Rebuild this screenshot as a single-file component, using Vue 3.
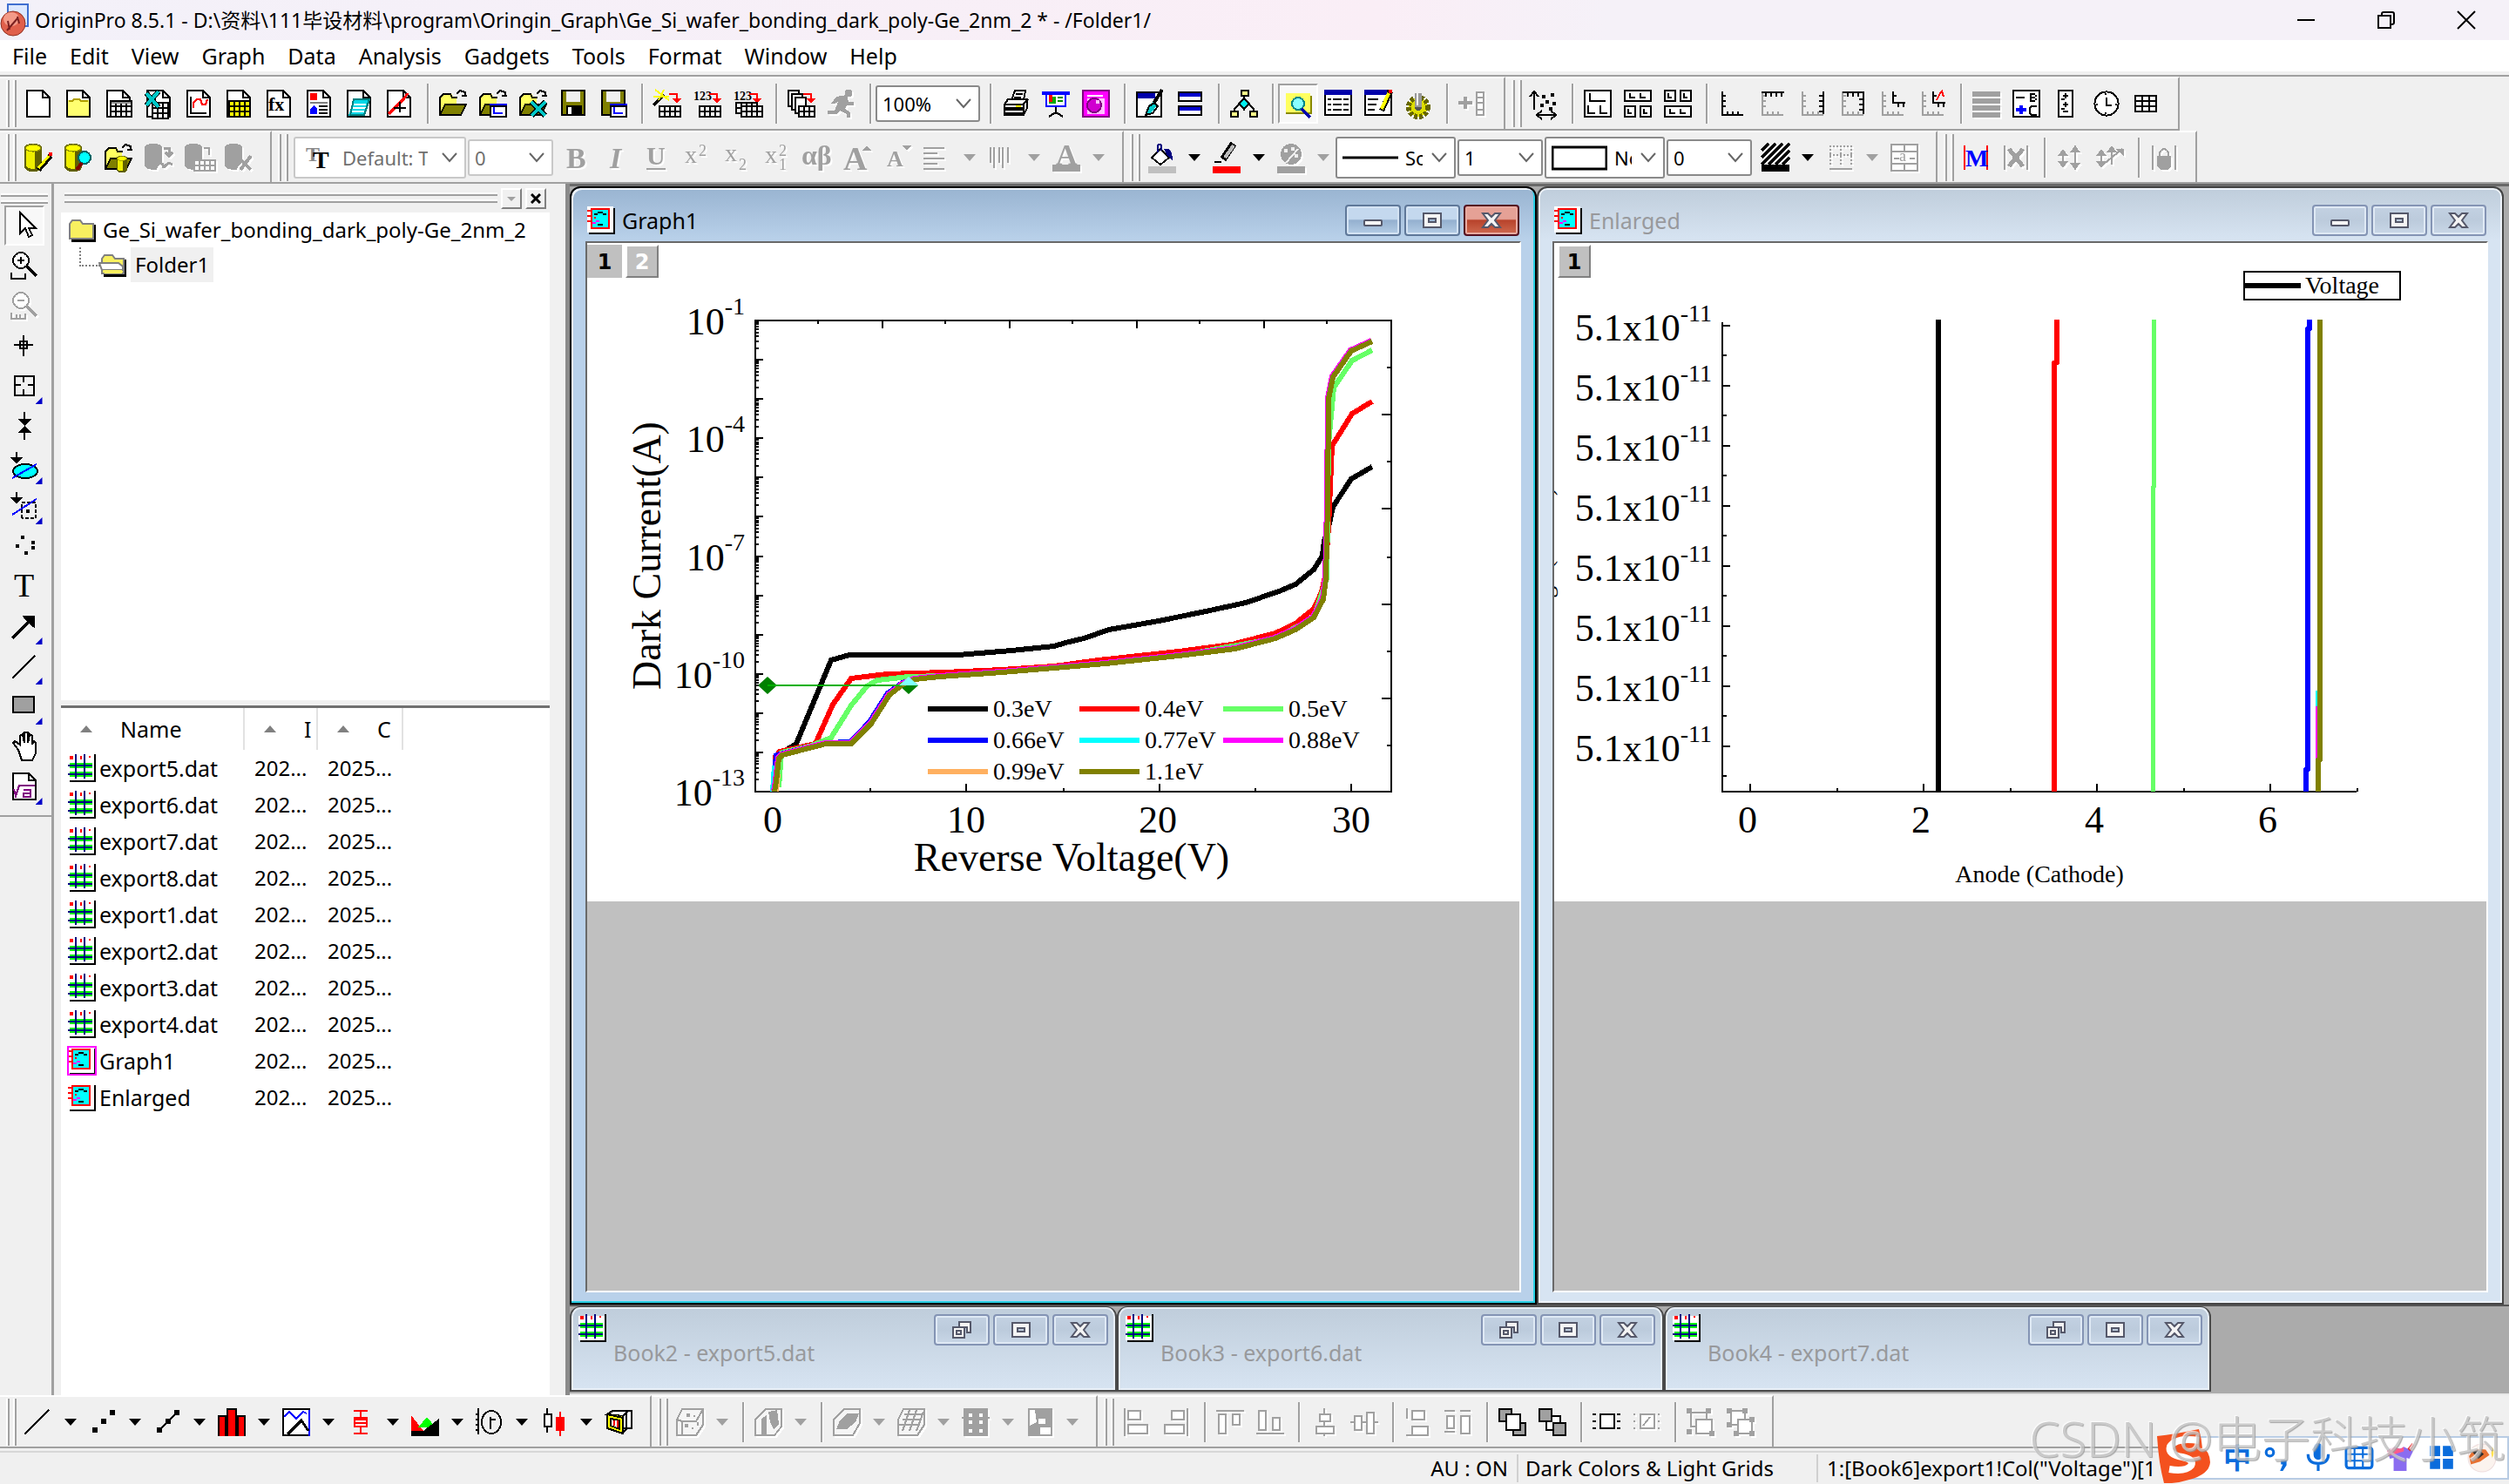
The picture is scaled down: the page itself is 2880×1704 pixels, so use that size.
<script setup>
const rect = (x, y, w, h, fill = '#000') => `<rect x="${x}" y="${y}" width="${w}" height="${h}" fill="${fill}"/>`
const line = (d, stroke = '#000', fill = 'none', w = 1) => `<path d="${d}" stroke="${stroke}" fill="${fill}" stroke-width="${w}"/>`
const shape = (d, fill = '#000') => `<path d="${d}" fill="${fill}"/>`
const glyph = (t, x, y, size, fill = '#000', extra = '') =>
  `<text x="${x}" y="${y}" font-size="${size}" font-family="Liberation Serif, serif" fill="${fill}" ${extra}>${t}</text>`
const grid = (x, y, cols, rows, cw, ch, fill = '#fff', stroke = '#000') => {
  let s = rect(x, y, cols * cw + 1, rows * ch + 1, stroke)
  for (let r = 0; r < rows; r++) for (let c = 0; c < cols; c++) s += rect(x + 1 + c * cw, y + 1 + r * ch, cw - 1, ch - 1, fill)
  return s
}
const G = '#a0a0a0'
const doc = line('M1.500 .5h9l4 4v11h-13z', '#000', '#fff') + line('M10.500 .5v4h4')
const folder = shape('M0 4h2l1-2h4l1 2h2v10h-10z', '#ffff60') + line('M.5 14.500v-10l2-2h4l1 2h3') + shape('M1 15l3-7h12l-4 7z', '#808000') + line('M.5 14.500l3-6h12l-3 6z') + line('M10 2.500l2-2 3 1v2M13 3.500h3')
const miniGraph = rect(6, 8, 10, 8) + rect(7, 10, 8, 5, '#fff') + rect(6, 8, 10, 1, '#00f') + line('M8.500 10v3.500h5', '#00f')
const redArrow = line('M9 2.500h4.500v4', '#f00') + shape('M11 5h5l-2.500 3z', '#f00')
const cylinder = shape('M0 2q0-2 5-2t5 2v11q0 3-5 3t-5-3z', '#606000') + shape('M1 2h5v12.500q-5 0-5-2z', '#ee0') + `<ellipse cx="5" cy="2.500" rx="4.500" ry="2" fill="#ff0" stroke="#909000" stroke-width=".6"/>`
const cylinderOff = shape('M0 2q0-2 5-2t5 2v9q-3 2-3 4-7 0-7-3z', G)
const box3d = line('M3.500 .5h12v9l-4 6h-11v-9z', G, '#f5f5f5') + line('M.5 6.500l3-6M.5 6.500l3 1v8M3.500 7.500h8l4-7', G)
const frame = (x, y, w, h, s = '#000', f = '#fff') => line(`M${x + .5} ${y + .5}h${w}v${h}h-${w}z`, s, f)
const axis = c => line('M2.500 1v13.500h12', c) + line('M3 3.500h1.500M3 6.500h1.500M3 9.500h1.500M5.500 12.500v2M8.500 12.500v2M11.500 12.500v2', c)
const axisTop = c => line('M14.500 14v-12.500h-12', c) + line('M11.500 2v2M8.500 2v2M5.500 2v2M14 5.500h-2M14 8.500h-2M14 11.500h-2', c)
const gridBook = rect(0, 1, 15, 14, '#fff') + rect(15, 0, 1, 16) + rect(1, 15, 15, 1) + rect(1, 1, 2, 2, '#f00') + rect(7, 1, 1, 2, '#f00') + rect(12, 1, 1, 1, '#f00') +
  rect(1, 5, 13, 3, '#0f0') + rect(1, 10, 13, 3, '#0f0') + rect(4, 5, 1, 8, '#fff') + rect(0, 6, 14, 1, '#00007f') + rect(0, 11, 14, 1, '#00007f') + rect(4, 0, 1, 14, '#00007f') + rect(9, 0, 1, 14, '#00007f')
const gridGraph = rect(0, 0, 15, 15, '#fff') + rect(15, 1, 1, 15) + rect(1, 15, 15, 1) + frame(2, 1, 10, 11, '#f00', '#0ff') + line('M0 2.500h2M0 5.500h2M0 8.500h2', '#f00') +
  rect(4, 4, 2, 1) + rect(6, 3, 3, 1) + rect(9, 4, 2, 1) + rect(4, 6, 1, 1, '#f00') + rect(5, 8, 2, 1, '#f0f') + rect(3, 9, 2, 1, '#f0f') + rect(6, 10, 3, 1)

const icons = {
  new: doc,
  newFolder: doc + rect(2, 6, 12, 9, '#ffff70') + line('M2.500 6.500h2l1-1h3l1 1h4', '#b0a000'),
  newBook: doc + grid(3, 6, 4, 3, 3, 3) + rect(4, 7, 11, 1, '#909090'),
  newExcel: doc + grid(4, 7, 3, 3, 3, 3) + line('M1 2l7 8M8 1l-7 8', '#000', 'none', 3) + line('M1 2l7 8M8 1l-7 8', '#00c8c8', 'none', 2),
  newGraph: doc + line('M3.500 4v9.500h9') + line('M5 10.500v-3l2-2h2l1 3h2l1-3', '#f00'),
  newMatrix: doc + grid(2, 6, 4, 3, 3, 3, '#ff0'),
  newFunc: doc + glyph('fx', 2, 12, 11, '#000', 'font-weight="bold"'),
  newLayout: doc + rect(3, 2, 4, 4, '#f00') + rect(3, 7, 10, 1, '#808080') + shape('M3 14v-3l2-2 2 2v3z', '#00f') + line('M8 9.500h5M8 11.500h5M8 13.500h5'),
  newNotes: doc + shape('M5 6h9l-3 9h-9z', '#00d8e8') + line('M4 8.500h8M4 10.500h8M3 12.500h8', '#fff') + line('M5 5.500h9l-3 9h-8z', '#008080'),
  newPlot: doc + line('M2 14l4-4 5-5 2-3', '#f00', 'none', 1.500) + line('M8.500 7v6M5 10.500h7'),
  open: folder,
  openTpl: folder + miniGraph,
  openXl: folder + line('M7 7l8 8M15 7l-8 8', '#000', 'none', 3) + line('M7 7l8 8M15 7l-8 8', '#00c8c8', 'none', 2),
  save: rect(1, 0, 14, 15) + rect(2, 1, 12, 13, '#808000') + rect(4, 1, 8, 6, '#f0f0f0') + rect(4, 9, 9, 6) + rect(5, 10, 2, 4, '#fff'),
  saveTpl: rect(1, 0, 14, 15) + rect(2, 1, 12, 13, '#808000') + rect(4, 1, 8, 6, '#f0f0f0') + miniGraph,
  impWiz: line('M0 9l6-6', '#000', 'none', 2) + line('M1 0l8 6M6 0l-3 6M0 4h9', '#ff0') + redArrow + grid(3, 9, 4, 2, 3, 3),
  imp1: glyph('123', 0, 6, 7, '#000', 'font-weight="bold"') + redArrow + grid(3, 9, 4, 2, 3, 3),
  impN: glyph('123', 0, 6, 7, '#000', 'font-weight="bold"') + redArrow + grid(1, 7, 4, 2, 3, 3) + grid(4, 9, 4, 2, 3, 3),
  dup: frame(0, 0, 6, 9) + frame(2, 2, 6, 9) + frame(4, 4, 6, 9) + redArrow + grid(6, 9, 3, 2, 3, 3),
  run: `<circle cx="12" cy="2" r="2.200" fill="${G}"/>` + shape('M5 4l6-1 1 4h3v2h-4l-1 2 3 2v3h-2v-2l-4-2-2 2H0v-2h4l2-5-2 1H2z', G),
  print: line('M5.500 6l2-5.500h6l-1 5.500z', '#000', '#fff') + line('M8 2.500h4M7 4.500h4') + line('M1.500 8.500l2-3h11v5l-2 4h-11z', '#000', '#fff') + line('M1 8.500h11l3-3M12.500 8v7', '#000') + rect(2, 10, 10, 2) + rect(8, 9, 3, 1, '#ff0') + line('M2 13.500h10'),
  slide: rect(0, 1, 16, 2, '#00f') + rect(2, 3, 12, 7, '#00f') + rect(3, 3, 10, 6, '#fff') + rect(4, 4, 4, 4, '#0a0') + rect(4, 3, 2, 4, '#f00') + line('M9 4.500h3M9 6.500h3', '#080') + line('M8 10v4M4 15.500l3-2h2l3 2'),
  project: frame(0, 0, 15, 15, '#800080', '#f0f') + rect(3, 3, 9, 1, '#fff') + rect(3, 5, 10, 9, '#ffc0ff') + `<circle cx="7" cy="9" r="4" fill="#d000d0" stroke="#800080"/>` + rect(8, 6, 2, 2, '#ffc0ff'),
  edit: frame(0, 1, 14, 14) + rect(1, 2, 10, 3, '#00a') + line('M15 0l-5 8', '#000', 'none', 2) + shape('M6 14l1-5 3-2 2 2-3 4z', '#0cc') + line('M5.500 14.500l2-5 3-2 2 2-3 4z'),
  twoWin: frame(1, 1, 13, 5) + rect(2, 2, 12, 2, '#00c') + frame(1, 9, 13, 5) + rect(2, 10, 12, 2, '#00c'),
  tree: line('M8 3v3M8 10v2M2.500 13v-2l3-3M13.500 13v-2l-3-3') + frame(6, 0, 4, 3, '#000', '#ff8') + shape('M8 5l3 3-3 3-3-3z', '#0ee') + line('M8 5l3 3-3 3-3-3z') + frame(0, 12, 4, 3, '#000', '#ff8') + frame(11, 12, 4, 3, '#000', '#ff8'),
  find: rect(1, 2, 14, 12, '#ffff60') + line('M1 13.500h14.500v-10', '#880') + `<circle cx="8" cy="8" r="3.500" fill="#8ff" stroke="#088"/>` + line('M10 11l5 5', '#00a', 'none', 2),
  list: frame(0, 0, 15, 14) + rect(0, 0, 16, 3, '#00a') + line('M2 5.500h12M2 8.500h12M2 11.500h12', '#000') + rect(4, 4, 1, 10, '#fff') + rect(10, 4, 1, 10, '#fff'),
  listEdit: frame(0, 0, 15, 14) + rect(0, 0, 13, 3, '#00a') + line('M2 5.500h6M2 8.500h5M2 11.500h4') + line('M15 1l-5 11', '#000', 'none', 3) + line('M14 2l-4 9', '#ff0', 'none', 2) + rect(14, 0, 2, 2, '#f00'),
  gear: `<circle cx="8" cy="10" r="5.500" fill="#dd0" stroke="#660" stroke-width="3" stroke-dasharray="2 1"/><circle cx="8" cy="10" r="4" fill="#dd0"/><circle cx="8" cy="10" r="2" fill="#555"/>` + rect(6, 2, 4, 8, '#999') + line('M7.500 2v7', '#eee'),
  addCol: line('M0 7.500h8M4 4v7', G, 'none', 2) + frame(10, 1, 4, 13, G) + line('M10 4.500h5M10 7.500h5M10 11.500h5', G),

  scatter: line('M2.500 1v10.500M0 4l2.500-3 2.500 3M5 14.500h10M7 12l-3 2.500 3 2.500M12 12l3 2.500-3 2.500') + rect(7, 3, 2, 2) + rect(12, 2, 2, 2) + rect(9, 6, 2, 2) + rect(13, 7, 2, 2) + rect(6, 8, 2, 2) + rect(11, 10, 2, 2),
  lay1: frame(0, 0, 15, 15) + line('M3.500 2v4.500h9M2.500 9v4.500h4M9.500 9v4.500h4'),
  lay2: frame(0, 0, 15, 6) + line('M3.500 2v2.500h3M9.500 2v2.500h3') + frame(0, 9, 6, 6) + frame(9, 9, 6, 6) + line('M2.500 11v2.500h2M11.500 11v2.500h2'),
  lay3: frame(0, 0, 6, 6) + frame(9, 0, 6, 6) + line('M2.500 2v2.500h2M11.500 2v2.500h2') + frame(0, 9, 15, 6) + line('M3.500 11v2.500h3M9.500 11v2.500h3'),
  ax1: axis('#000'),
  ax2: axis(G) + line('M2 1.500h13M4.500 2v2M7.500 2v2M10.500 2v2M13.500 2v2'),
  ax3: axis(G) + line('M14.500 1v13M14 3.500h-2M14 6.500h-2M14 9.500h-2M14 12.500h-2'),
  ax4: axis(G) + axisTop('#000'),
  ax5: axis(G) + line('M8.500 1v6.500h7M9 3.500h1.500M11.500 8v2M14.500 8v2'),
  ax6: axis(G) + line('M8.500 1v6.500h7M9 3.500h1.500M11.500 8v2M14.500 8v2') + line('M10.500 6l2-4 1-1 1 3', '#f00'),
  bars: rect(0, 1, 16, 3, G) + rect(0, 5, 16, 3, G) + rect(0, 9, 16, 3, G) + rect(0, 13, 16, 3, G),
  bc: frame(0, 0, 15, 15) + line('M2 4.500h5M10.500 2v5M10 2.500h3M10 4.500h3M10 6.500h3M13.500 3v1M13.500 5v1M14 9.500h-3l-1 1v3l1 1h3') + line('M2 11.500h6M5 9v5', '#00f', 'none', 2),
  scaleBar: frame(3, 0, 8, 15) + line('M6 3.500h3M7.500 2v3M6 8.500h3M7.500 7v3M6 12.500h3M5 5.500h2M5 11h2'),
  clock: `<circle cx="8" cy="8" r="6.800" fill="#fff" stroke="#000"/>` + line('M8 4.500v4.500h3') + rect(7, 2, 1, 1) + rect(7, 13, 1, 1) + rect(2, 8, 1, 1) + rect(13, 8, 1, 1),
  table: grid(1, 3, 3, 3, 4, 3),

  dbEdit: cylinder + line('M15 7l-7 8', '#000', 'none', 3) + line('M14 7l-6 7', '#ff0', 'none', 1.500) + rect(14, 5, 2, 2, '#f00'),
  dbFind: cylinder + `<circle cx="11.500" cy="8" r="3.500" fill="#0ff" stroke="#066"/>` + line('M10 11l-3 4', '#800000', 'none', 2),
  dbOpen: folder + `<g transform="translate(7 7) scale(.6)">${cylinder}</g>`,
  db4: cylinderOff + line('M11 2.500h3v4M12 5l2 2 2-2M6 14q-1-3 2-3t3 3q2-4 5-2', G, 'none', 1.500),
  db5: cylinderOff + line('M11 2.500h3v4', G) + grid(5, 9, 4, 2, 3, 3, '#fff', G),
  db6: cylinderOff + line('M9 15l6-8M9 9l6 6', G, 'none', 2),
  bold: glyph('B', 2, 14, 17, G, 'font-weight="bold"'),
  ital: glyph('I', 4, 14, 17, G, 'font-weight="bold" font-style="italic"'),
  under: glyph('U', 2, 12, 15, G, 'font-weight="bold"') + rect(2, 14, 11, 1, G),
  sup: glyph('x', 1, 11, 14, G) + glyph('2', 9, 7, 9, G),
  sub: glyph('x', 1, 10, 14, G) + glyph('2', 9, 15, 9, G),
  supsub: glyph('x', 1, 11, 14, G) + glyph('2', 9, 7, 9, G) + glyph('1', 9, 15, 9, G),
  greek: glyph('αβ', -1, 12, 16, G, 'font-weight="bold"'),
  bigger: glyph('A', 0, 15, 19, G, 'font-weight="bold"') + shape('M11 4l2.500-3 2.500 3z', G),
  smaller: glyph('A', 2, 13, 13, G, 'font-weight="bold"') + shape('M11 1h5l-2.500 3z', G),
  align: line('M0 2.500h12M0 5.500h8M0 8.500h12M0 11.500h8', G) + line('M0 14.500h12', G),
  vlines: line('M1.500 2v9M3.500 2v12M6.500 2v9M8.500 2v12M11.500 2v9', G),
  fontCol: glyph('A', 2, 12, 17, G, 'font-weight="bold"') + rect(0, 12, 16, 4, G),
  fill: line('M2 8l5-5 5 5-5 4z', '#000', '#fff') + line('M5.500 5v-4q1-1 2 0v3', '#00007f') + shape('M9 3h3q2 2 2 7l-3-3z', '#00007f') + rect(0, 13, 16, 4, '#c0c0c0'),
  pen: line('M12 0l-6 9', '#000', 'none', 4) + line('M12 1l-5 7', '#bbb', 'none', 2) + line('M1 10.500h4') + rect(0, 13, 16, 4, '#f00'),
  palette: `<circle cx="8" cy="6" r="6" fill="${G}"/>` + rect(4, 3, 2, 2, '#eee') + rect(8, 2, 2, 2, '#eee') + rect(10, 6, 2, 2, '#eee') + line('M5 11l7-8', '#eee') + rect(0, 13, 16, 4, G),
  hatch: line('M0 4l4-4M0 8l8-8M0 12l12-12M4 12l12-12M8 12l8-8M12 12l4-4', '#000', 'none', 1.600) + rect(0, 12, 16, 4),
  border: line('M2 1.500h13M2 6.500h13M2.500 1v11M8.500 1v11M14.500 1v11', G, 'none').replace('<path', '<path stroke-dasharray="1 1"') + rect(2, 14, 13, 1, G),
  cells: frame(0, 0, 15, 15, G) + line('M0 4.500h16M0 11.500h16M8 0v4M8 12v4M2 8.500h3M11 8.500h3', G) + glyph('a', 5, 10, 9, G),
  mark: line('M1.500 1v14M14.500 1v14', '#f00') + glyph('M', 2, 13, 14, '#00f', 'font-weight="bold"'),
  unmark: line('M1.500 1v14M14.500 1v14', G) + line('M4 3l8 10M12 3l-8 10', G, 'none', 2.500),
  arr1: line('M4 4v9M11 1v14', G) + shape('M1 7l3-4 3 4zM1 10l3 4 3-4zM8 5l3-4 3 4zM8 11l3 4 3-4z', G),
  arr2: line('M3 4v9M9 2v10M4 12l11-9', G) + shape('M0 7l3-4 3 4zM0 10l3 4 3-4zM6 5l3-4 3 4zM11 3h5v4z', G),
  lock: line('M1.500 1v14M14.500 1v14M5.500 7v-2q2.500-4 5 0v2', G) + shape('M4 7h8v6l-2 2h-4l-2-2z', G),

  pline: line('M0 15L14 1'),
  pscatter: rect(2, 11, 3, 3) + rect(7, 6, 3, 3) + rect(12, 1, 3, 3),
  plinesym: line('M3 13L14 2') + rect(2, 11, 3, 3) + rect(7, 6, 3, 3) + rect(12, 1, 3, 3),
  pbar: rect(0, 4, 16, 12) + rect(5, 0, 6, 5) + rect(1, 5, 3, 11, '#f00') + rect(6, 1, 4, 15, '#f00') + rect(12, 5, 3, 11, '#f00'),
  pmulti: frame(0, 0, 15, 15) + line('M15.500 1v15M1 5l3-3 4 4 4-4 2 1', '#00f') + line('M3 15l8-8 4 6', '#000', 'none', 1.500),
  pbox: line('M4 1.500h8M8 2v4M8 11v4M4 14.500h8', '#f00') + rect(4, 5, 8, 6, '#f00') + rect(5, 7, 6, 1, '#fff') + rect(5, 9, 6, 1, '#fff'),
  parea: shape('M0 4l7 9h9v3H0z', '#f00') + shape('M4 11l5-6 5 6z', '#0f0') + shape('M0 13h7l9-7v10H0z'),
  ppolar: line('M1.500 0v15M0 3.500h2M0 6.500h2M0 9.500h2M0 12.500h2') + `<ellipse cx="9" cy="8" rx="5.500" ry="6.500" fill="none" stroke="#000"/>` + line('M8.500 5v7M8.500 6.500h3'),
  pstock: line('M4 0v14') + frame(2, 3, 4, 7) + line('M11.500 2v14', '#f00') + rect(9, 5, 5, 8, '#f00'),
  pbook: frame(5, 1, 10, 10, '#000', '#fff') + line('M1.500 3.500l3-2h9l-3 3z', '#000', '#fff') + line('M12.500 3v9l-2 2', '#000') + shape('M1 3l10 2v10l-9-3z', '#ff0') + line('M1.500 3.500l9 2v9l-9-3z') + line('M3.500 6v4l5 2v-5z', '#000', '#fff') + line('M5.500 7v3M7.500 7v4', '#f00'),
  b1: box3d + rect(6, 3, 2, 2, G) + rect(10, 4, 1, 1, G) + rect(5, 9, 2, 2, G) + rect(9, 11, 1, 1, G) + rect(12, 8, 1, 2, G),
  b2: line('M3.500 3.500l3-3h9v10l-4 5h-11v-9z', G, '#f5f5f5') + shape('M4 6l3-2v12H4zM8 2l5-1 1 8-3 3-2-4z', G),
  b3: line('M3.500 3.500l3-3h9v8l-4 7h-11v-9z', G, '#f5f5f5') + shape('M4 7l4-4h7l-2 5-5 4H2z', G),
  b4: line('M3.500 .5h12v9l-4 6h-11v-9z', G, '#f5f5f5') + line('M4 3.500h11M3 6.500h11M1 9.500h12M7 1l-4 12M11 1l-4 12M15 2l-4 11', G),
  b5: rect(1, 0, 14, 16, G) + rect(4, 3, 2, 2, '#fff') + rect(10, 3, 2, 2, '#fff') + rect(4, 7, 2, 2, '#fff') + rect(10, 7, 2, 2, '#fff') + rect(4, 12, 2, 2, '#fff') + rect(10, 12, 2, 2, '#fff') + rect(0, 5, 16, 1, G),
  b6: frame(1, 0, 13, 15, G) + shape('M5 1h9v10H8v4H2v-5l4-2z', G) + rect(7, 6, 4, 3, '#fff'),
  al1: line('M1.500 0v16', G) + frame(3, 1, 7, 5, G) + frame(3, 9, 11, 5, G),
  al2: line('M14.500 0v16', G) + frame(5, 1, 7, 5, G) + frame(1, 9, 11, 5, G),
  al3: line('M0 1.500h16', G) + frame(1, 3, 4, 11, G) + frame(9, 3, 4, 6, G),
  al4: line('M0 14.500h16', G) + frame(1, 1, 4, 11, G) + frame(9, 5, 4, 7, G),
  al5: line('M8 0v16', G) + frame(5, 3, 6, 4, G) + frame(3, 10, 10, 4, G),
  al6: line('M0 8h16', G) + frame(2, 4, 4, 8, G) + frame(9, 2, 4, 12, G),
  al7: line('M1.500 0v6M1 15.500h3', G) + frame(4, 1, 7, 5, G) + frame(4, 10, 9, 5, G),
  al8: line('M0 1.500h6M9 1.500h6M0 13.500h6', G) + frame(1, 4, 4, 7, G) + frame(9, 4, 5, 10, G),
  front: frame(0, 0, 7, 7, '#000', G) + frame(8, 8, 7, 7, '#000', G) + frame(4, 3, 8, 9),
  back: frame(4, 4, 8, 8) + frame(0, 0, 7, 7, '#000', G) + frame(8, 8, 7, 7, '#000', G),
  sel: frame(4, 3, 8, 8) + line('M1 3v1M1 7v1M1 11v1M15 3v1M15 7v1M15 11v1', '#000', 'none', 2),
  unsel: frame(4, 3, 8, 8, G) + line('M6 10l4-5M1 3v1M1 7v1M1 11v1M15 3v1M15 7v1M15 11v1', G, 'none', 1),
  group: frame(2, 2, 9, 8, G, 'none') + frame(5, 6, 9, 8, G) + rect(0, 0, 3, 3, G) + rect(11, 0, 3, 3, G) + rect(0, 12, 3, 3, G) + rect(13, 13, 3, 3, G),
  ungroup: frame(2, 1, 8, 8, G) + frame(6, 6, 8, 8, G) + rect(0, 0, 3, 3, G) + rect(9, 0, 3, 3, G) + rect(0, 8, 3, 3, G) + rect(13, 5, 3, 3, G) + rect(4, 13, 3, 3, G) + rect(13, 13, 3, 3, G),

  pointer: line('M5.500 .5v12l3-3 2 5 2-1-2-4h4z', '#000', '#fff'),
  zoomIn: `<circle cx="6" cy="5" r="4.500" fill="#fff" stroke="#000"/>` + line('M6 3v4M4 5h4') + line('M9 8l6 6', '#000', 'none', 2) + line('M.5 12v3.500h8v-3'),
  zoomOut: `<circle cx="6" cy="5" r="4.500" fill="#fff" stroke="${G}"/>` + line('M4 5h4', G) + line('M9 8l6 6', G, 'none', 2) + line('M.5 12v3.500h8v-3M3.500 13v2M5.500 13v2', G),
  reader: line('M7.500 2v12M2 7.500h11M5.500 5.500h4v4h-4z'),
  dataReader: frame(2, 2, 11, 11, '#000', 'none') + line('M7.500 2v4M7.500 10v4M2 7.500h4M10 7.500h4'),
  selector: line('M8 0v5M8 11v5') + shape('M4 4h8l-4 4zM4 12h8l-4-4z'),
  mask1: line('M3.500 0v4') + shape('M0 3h7l-3.500 4z') + `<ellipse cx="8.500" cy="11" rx="7" ry="4" fill="#0ff" stroke="#000"/>` + line('M1 15l14-8', '#00f'),
  mask2: line('M3.500 0v4') + shape('M0 3h7l-3.500 4z') + line('M6.500 15v-9h8v9h-8').replace('<path', '<path stroke-dasharray="2 1"') + line('M1 13l14-9', '#00f') + rect(9, 10, 2, 2),
  dots: rect(6, 2, 2, 2) + rect(3, 7, 2, 2) + rect(12, 5, 2, 2) + rect(12, 8, 2, 2) + rect(8, 11, 2, 2),
  text: glyph('T', 2, 14, 19),
  arrow: line('M1 15L11 5', '#000', 'none', 1.500) + shape('M7 2h7v7l-2-1-4-4z'),
  ruler: line('M1 15L14 2', '#000', 'none', 1.300),
  rectangle: frame(1, 2, 12, 9, '#000', G),
  hand: line('M4.500 10l-3-4 1-1 3 2v-5l1.500-1 1 5v-6l2 0v6l1-5 1.500 1v5l1-2 1 1v6l-2 4h-6z', '#000', '#fff'),
  eqn: doc + line('M2 9.500l1 4 2-6h9M7.500 10h4v4h-4v-2h4', '#800080'),
}

const c = (w, h, label, value, extra = {}) => ({ w, h, label, value, ...extra })
const top1 = [
  ['new', 'newFolder', 'newBook', 'newExcel', 'newGraph', 'newMatrix', 'newFunc', 'newLayout', 'newNotes', 'newPlot', '|', 'open', 'openTpl', 'openXl', 'save', 'saveTpl', '|', 'impWiz', 'imp1', 'impN', '|', 'dup', '-run', '|',
    c(120, 42, 'Zoom', '100%'), '|', 'print', 'slide', 'project', '|', 'edit', 'twoWin', '|', 'tree', '|', '+find', 'list', 'listEdit', 'gear', '|', '-addCol'],
  ['scatter', '|', 'lay1', 'lay2', 'lay3', '|', 'ax1', 'ax2', 'ax3', 'ax4', 'ax5', 'ax6', '|', '-bars', 'bc', 'scaleBar', 'clock', 'table'],
]
const top2 = [
  ['dbEdit', 'dbFind', 'dbOpen', '-db4', '-db5', '-db6'],
  [c(198, 48, 'Font', 'Default: Times New Roman', { icon: 'tt', off: true }), c(98, 42, 'Font size', '0', { off: true }), '-bold', '-ital', '-under', '-sup', '-sub', '-supsub', '-greek', '-bigger', '-smaller', '-align', '-v', '-vlines', '-v', '-fontCol', '-v'],
  ['fill', 'v', 'pen', 'v', '-palette', '-v', c(138, 48, 'Line style', 'Solid', { icon: 'stroke' }), c(98, 42, 'Line width', '1'), c(138, 48, 'Pattern', 'None', { icon: 'swatch' }), c(98, 42, 'Pattern width', '0'), 'hatch', 'v', '-border', '-v', '-cells'],
  ['mark', '-unmark', '|', '-arr1', '-arr2', '|', '-lock'],
]
const bottom = [
  ['pline', 'v', 'pscatter', 'v', 'plinesym', 'v', 'pbar', 'v', 'pmulti', 'v', 'pbox', 'v', 'parea', 'v', 'ppolar', 'v', 'pstock', 'v', 'pbook'],
  ['-b1', '-v', '|', '-b2', '-v', '|', '-b3', '-v', '-b4', '-v', '-b5', '-v', '-b6', '-v'],
  ['-al1', '-al2', '|', '-al3', '-al4', '|', '-al5', '-al6', '|', '-al7', '-al8', '|', 'front', 'back', '|', 'sel', '-unsel', '|', '-group', '-ungroup'],
]
const norm = groups => groups.map(g => g.map(it => {
  if (typeof it !== 'string') return { kind: 'combo', ...it }
  if (it === '|') return { kind: 'sep' }
  const off = it[0] === '-', on = it[0] === '+'
  const name = off || on ? it.slice(1) : it
  return { kind: name === 'v' ? 'drop' : 'btn', name, off, on }
}))
const bars = [
  { id: 't1', groups: norm(top1) },
  { id: 't2', groups: norm(top2) },
  { id: 'b', groups: norm(bottom) },
]
const menus = ['File', 'Edit', 'View', 'Graph', 'Data', 'Analysis', 'Gadgets', 'Tools', 'Format', 'Window', 'Help']
const tools = [
  { n: 'pointer', on: true }, { n: 'zoomIn' }, { n: 'zoomOut', off: true }, { n: 'reader' }, { n: 'dataReader', more: true }, { n: 'selector' },
  { n: 'mask1', more: true }, { n: 'mask2', more: true }, { n: 'dots' }, { n: 'text' }, { n: 'arrow', more: true }, { n: 'ruler', more: true },
  { n: 'rectangle', more: true }, { n: 'hand' }, { n: 'eqn', more: true },
]
const files = [...[5, 6, 7, 8, 1, 2, 3, 4].map(n => ({ name: `export${n}.dat`, icon: gridBook })), { name: 'Graph1', icon: gridGraph, active: true }, { name: 'Enlarged', icon: gridGraph }]
const books = ['Book2 - export5.dat', 'Book3 - export6.dat', 'Book4 - export7.dat']

// Graph1: log y axis, 10^-1 .. 10^-13
const decade = 541 / 12
const logTicks = []
for (let d = 0; d < 12; d++) {
  logTicks.push({ y: 89 + d * decade, len: 9 })
  for (let k = 2; k < 10; k++) logTicks.push({ y: 89 + (d + 1 - Math.log10(k)) * decade, len: 4 })
}
const yLabels = [-1, -4, -7, -10, -13].map((e, i) => ({ e: String(e), y: 105 + i * 3 * decade }))
const olive = '215,630 217,618 220,592 224,588 274,575 303,575 326,552 347,519 362,507 376,501 405,498 476,493 536,488 595,483 679,474 744,466 790,454 813,444 834,430 845,409 848,385 850,300 851,179 856,154 877,124 901,113'
const curves = [
  { c: '#000', p: '216,630 218,592 224,585 240,575 280,479 301,473 426,473 487,468 536,463 549,459 570,454 599,444 656,434 710,423 756,413 794,400 813,392 834,375 844,359 846,342 850,331 856,303 877,271 901,257' },
  { c: '#f00', p: '215,630 216,590 221,584 262,575 282,530 303,500 344,495 410,493 476,490 536,486 587,479 679,469 740,461 790,448 813,437 834,420 843,401 847,383 851,326 855,233 878,196 901,182' },
  { c: '#6f6', p: '220,625 223,585 255,578 280,568 303,531 321,509 333,502 369,498 410,497 536,488 679,474 790,454 834,430 849,385 851,230 857,166 878,135 901,123' },
  { c: '#00f', p: '214,618 217,588 274,574 302,573 324,550 345,517 362,505 376,500' },
  { c: '#0ff', p: '213,630 215,600' },
  { c: '#f0f', p: olive, dx: -1, dy: -1 },
  { c: '#ffb060', p: '217,630 219,610' },
  { c: '#808000', p: olive },
]
const legend = [
  { t: '0.3eV', c: '#000', x: 391, y: 535 }, { t: '0.4eV', c: '#f00', x: 565, y: 535 }, { t: '0.5eV', c: '#6f6', x: 730, y: 535 },
  { t: '0.66eV', c: '#00f', x: 391, y: 571 }, { t: '0.77eV', c: '#0ff', x: 565, y: 571 }, { t: '0.88eV', c: '#f0f', x: 730, y: 571 },
  { t: '0.99eV', c: '#ffb060', x: 391, y: 607 }, { t: '1.1eV', c: '#808000', x: 565, y: 607 },
]
const seq = (n, a, step) => Array.from({ length: n }, (_, i) => a + i * step)
const traces = [
  { c: '#000', w: 6, p: '441,88 441,630' },
  { c: '#f00', w: 6, p: '577,88 577,137 574,138 574,630' },
  { c: '#6f6', w: 5, p: '688,88 688,280 687,281 687,630' },
  { c: '#00f', w: 6, p: '867,88 867,98 865,99 865,604 863,605 863,630' },
  { c: '#0ff', w: 2, p: '875,514 875,532' },
  { c: '#f0f', w: 2, p: '875,532 875,593' },
  { c: '#808000', w: 6, p: '879,88 879,593 877,594 877,630' },
]
</script>

<template>
  <div class="app">
    <header class="titlebar">
      <svg class="logo" viewBox="0 0 34 38">
        <rect x="9" y="1" width="23" height="25" fill="#dce8ff" stroke="#3f6fd0" stroke-width="2" />
        <ellipse cx="15" cy="23" rx="14" ry="14" fill="#e0604c" stroke="#903020" />
        <ellipse cx="13" cy="18" rx="9" ry="8" fill="#f39a88" />
        <path d="M8 31L21 16M9 20l2 10M20 15l2 8" stroke="#7a2020" stroke-width="2" fill="none" />
      </svg>
      <h1>OriginPro 8.5.1 - D:\资料\111毕设材料\program\Oringin_Graph\Ge_Si_wafer_bonding_dark_poly-Ge_2nm_2 * - /Folder1/</h1>
      <button class="sys" aria-label="Minimize"><svg viewBox="0 0 20 20"><path d="M0 10h20" /></svg></button>
      <button class="sys" aria-label="Restore"><svg viewBox="0 0 20 20"><path d="M1 5h14v14H1zM5 5V3q0-2 2-2h10q2 0 2 2v10q0 2-3 2" /></svg></button>
      <button class="sys" aria-label="Close"><svg viewBox="0 0 20 20"><path d="M0 0l20 20M20 0L0 20" /></svg></button>
    </header>

    <nav class="menu"><button v-for="m in menus" :key="m">{{ m }}</button></nav>

    <template v-for="bar in bars" :key="bar.id">
      <main v-if="bar.id === 'b'" class="work">
        <aside class="toolcol">
          <div class="tools">
            <i class="hgrip"></i>
            <button v-for="t in tools" :key="t.n" :aria-label="t.n" :class="{ pressed: t.on }" :disabled="t.off">
              <svg class="ico" :class="{ off: t.off }" viewBox="0 0 16 16" v-html="icons[t.n]"></svg>
              <span v-if="t.more" class="corner"></span>
            </button>
          </div>
        </aside>

        <section class="explorer">
          <div class="caption">
            <i class="hgrip"></i>
            <button aria-label="Options"><svg viewBox="0 0 12 12"><path d="M1 4h10L6 9z" fill="#a0a0a0" /></svg></button>
            <button aria-label="Close panel"><svg viewBox="0 0 12 12"><path d="M1 1l10 10M11 1L1 11" stroke="#000" stroke-width="3" /></svg></button>
          </div>
          <div class="tree">
            <div class="node">
              <svg viewBox="0 0 32 28"><path d="M30 8v18H4" fill="none" stroke="#000" stroke-width="4" /><path d="M2 24V7l3-4h9l3 4h12v17z" fill="#f8f060" stroke="#808080" stroke-width="2" /></svg>
              <span>Ge_Si_wafer_bonding_dark_poly-Ge_2nm_2</span>
            </div>
            <div class="node child">
              <svg viewBox="0 0 32 28"><path d="M30 8v18H6" fill="none" stroke="#000" stroke-width="4" /><path d="M4 24V7l3-4h9l3 4h10v17z" fill="#f8f060" stroke="#808080" stroke-width="2" /><path d="M1 12h22l5 4v4H4z" fill="#fff" stroke="#808080" stroke-width="2" /><path d="M5 20h22v4H7z" fill="#f8f060" /></svg>
              <span class="picked">Folder1</span>
            </div>
          </div>
          <div class="list">
            <table>
              <thead>
                <tr>
                  <th><i class="up"></i>Name</th>
                  <th><i class="up"></i>I</th>
                  <th><i class="up"></i>C</th>
                </tr>
              </thead>
              <tbody>
                <tr v-for="f in files" :key="f.name">
                  <td><div class="file"><svg :class="{ active: f.active }" viewBox="0 0 16 16" v-html="f.icon"></svg>{{ f.name }}</div></td>
                  <td>202...</td>
                  <td>2025...</td>
                </tr>
              </tbody>
            </table>
          </div>
        </section>

        <section class="mdi">
          <div class="graphs">
            <article class="win focus">
              <div class="wintitle">
                <svg class="ico" viewBox="0 0 16 16" v-html="gridGraph"></svg>
                <h2>Graph1</h2>
                <button aria-label="Minimize"><svg viewBox="0 0 24 20"><rect x="2" y="10" width="20" height="6" rx="1" /></svg></button>
                <button aria-label="Maximize"><svg viewBox="0 0 24 20"><path fill-rule="evenodd" d="M2 2h20v16H2zM8 8h8v4H8z" /></svg></button>
                <button class="close" aria-label="Close"><svg viewBox="0 0 24 20"><path d="M2 2h6l4 4 4-4h6l-6 8 6 8h-6l-4-4-4 4H2l6-8z" /></svg></button>
              </div>
              <div class="client">
                <div class="layers flush"><span class="cur">1</span><span class="oth">2</span></div>
                <svg class="page" viewBox="0 0 1070 756">
                  <g stroke="#000" stroke-width="2" fill="none" shape-rendering="crispEdges">
                    <path d="M193 89H923V630H193z" />
                    <path v-for="(t, i) in logTicks" :key="i" :d="`M193 ${t.y}h${t.len}`" />
                    <path v-for="x in [435, 657, 877]" :key="'b' + x" :d="`M${x} 630v-9`" />
                    <path v-for="x in [325, 547, 767]" :key="'m' + x" :d="`M${x} 630v-4`" />
                    <path v-for="x in seq(4, 339, 146)" :key="'t' + x" :d="`M${x} 89v9`" />
                    <path v-for="x in seq(5, 265, 146)" :key="'u' + x" :d="`M${x} 89v4`" />
                    <path v-for="y in [197, 305, 415, 523]" :key="'r' + y" :d="`M923 ${y}h-11`" />
                    <path v-for="y in [143, 251, 361, 469, 577]" :key="'s' + y" :d="`M923 ${y}h-5`" />
                  </g>
                  <g class="num">
                    <text v-for="l in yLabels" :key="l.e" x="181" :y="l.y" text-anchor="end">10<tspan dy="-23" font-size="28">{{ l.e }}</tspan></text>
                    <text x="213" y="677" text-anchor="middle">0</text>
                    <text x="435" y="677" text-anchor="middle">10</text>
                    <text x="655" y="677" text-anchor="middle">20</text>
                    <text x="877" y="677" text-anchor="middle">30</text>
                    <text class="axt" x="556" y="721" text-anchor="middle">Reverse Voltage(V)</text>
                    <text class="axt" transform="translate(84 359) rotate(-90)" text-anchor="middle">Dark Current(A)</text>
                  </g>
                  <path d="M196 508l11-10 11 10-11 10zM358 508l11-10 11 10-11 10z" fill="#008000" />
                  <g fill="none" stroke-width="6" stroke-linejoin="round" shape-rendering="crispEdges">
                    <polyline v-for="k in curves" :key="k.c" :points="k.p" :stroke="k.c" :transform="`translate(${k.dx || 0} ${k.dy || 0})`" />
                  </g>
                  <path d="M207 508h154" stroke="#00b000" stroke-width="2" />
                  <path d="M358 508l11-10 11 10z" fill="#80ffff" />
                  <g class="leg">
                    <template v-for="l in legend" :key="l.t">
                      <path :d="`M${l.x} ${l.y}h69`" :stroke="l.c" stroke-width="6" />
                      <text :x="l.x + 75" :y="l.y + 9">{{ l.t }}</text>
                    </template>
                  </g>
                </svg>
              </div>
            </article>

            <article class="win">
              <div class="wintitle">
                <svg class="ico" viewBox="0 0 16 16" v-html="gridGraph"></svg>
                <h2>Enlarged</h2>
                <button aria-label="Minimize"><svg viewBox="0 0 24 20"><rect x="2" y="10" width="20" height="6" rx="1" /></svg></button>
                <button aria-label="Maximize"><svg viewBox="0 0 24 20"><path fill-rule="evenodd" d="M2 2h20v16H2zM8 8h8v4H8z" /></svg></button>
                <button aria-label="Close"><svg viewBox="0 0 24 20"><path d="M2 2h6l4 4 4-4h6l-6 8 6 8h-6l-4-4-4 4H2l6-8z" /></svg></button>
              </div>
              <div class="client">
                <div class="layers"><span class="oth dark">1</span></div>
                <svg class="page" viewBox="0 0 1070 756">
                  <g stroke="#000" stroke-width="2" fill="none" shape-rendering="crispEdges">
                    <path d="M193 91V630H921" />
                    <path v-for="y in seq(8, 95, 69)" :key="'y' + y" :d="`M193 ${y}h9`" />
                    <path v-for="y in seq(8, 129, 69)" :key="'z' + y" :d="`M193 ${y}h5`" />
                    <path v-for="x in seq(4, 225, 199)" :key="'x' + x" :d="`M${x} 630v-9`" />
                    <path v-for="x in seq(4, 325, 199)" :key="'w' + x" :d="`M${x} 630v-4`" />
                    <polyline v-for="t in traces" :key="t.c" :points="t.p" :stroke="t.c" :stroke-width="t.w" />
                    <path d="M792 33h179v32H792z" />
                    <path d="M791 49h66" stroke-width="6" />
                  </g>
                  <g class="num">
                    <text v-for="y in seq(8, 112, 69)" :key="y" x="181" :y="y" text-anchor="end">5.1x10<tspan dy="-22" font-size="28">-11</tspan></text>
                    <text v-for="(x, i) in seq(4, 222, 199)" :key="x" :x="x" y="677" text-anchor="middle">{{ i * 2 }}</text>
                  </g>
                  <g class="leg">
                    <text x="862" y="58">Voltage</text>
                    <text x="557" y="734" text-anchor="middle">Anode (Cathode)</text>
                    <text transform="translate(-2 281) rotate(-90)" text-anchor="end">Voltage (Anode)</text>
                  </g>
                </svg>
              </div>
            </article>
          </div>
          <div class="books">
            <article v-for="b in books" :key="b" class="book">
              <svg class="ico" viewBox="0 0 16 16" v-html="gridBook"></svg>
              <h2>{{ b }}</h2>
              <button aria-label="Restore"><svg viewBox="0 0 24 20"><path d="M9 1h13v12h-4V7H9zM2 7h13v12H2z" /><rect x="6" y="11" width="5" height="4" /></svg></button>
              <button aria-label="Maximize"><svg viewBox="0 0 24 20"><path fill-rule="evenodd" d="M2 2h20v16H2zM8 8h8v4H8z" /></svg></button>
              <button aria-label="Close"><svg viewBox="0 0 24 20"><path d="M2 2h6l4 4 4-4h6l-6 8 6 8h-6l-4-4-4 4H2l6-8z" /></svg></button>
            </article>
          </div>
        </section>
      </main>

      <div class="bar" :class="bar.id">
        <div v-for="(g, gi) in bar.groups" :key="gi" class="group">
          <i class="grip"></i>
          <template v-for="(it, i) in g" :key="i">
            <i v-if="it.kind === 'sep'" class="sep"></i>
            <button v-else-if="it.kind === 'drop'" class="drop" :disabled="it.off" aria-label="More"><svg viewBox="0 0 14 8"><path d="M0 0h14L7 8z" /></svg></button>
            <div v-else-if="it.kind === 'combo'" class="combo" :class="{ off: it.off }" :style="{ width: it.w + 'px', height: it.h + 'px' }">
              <svg v-if="it.icon === 'tt'" class="tt" viewBox="0 0 32 32"><text x="2" y="20" font-size="24" fill="#888">T</text><text x="10" y="28" font-size="28">T</text></svg>
              <svg v-if="it.icon === 'stroke'" class="samp" viewBox="0 0 64 34"><path d="M0 17h64" /></svg>
              <svg v-if="it.icon === 'swatch'" class="samp" viewBox="0 0 64 34"><path d="M1 5h62v25H1z" /></svg>
              <select :aria-label="it.label" :disabled="it.off"><option>{{ it.value }}</option></select>
              <svg class="chev" viewBox="0 0 18 12"><path d="M1 1l8 9 8-9" /></svg>
            </div>
            <button v-else class="tb" :class="{ pressed: it.on }" :disabled="it.off" :aria-label="it.name">
              <svg class="ico" :class="{ off: it.off }" viewBox="0 0 16 16" v-html="icons[it.name]"></svg>
            </button>
          </template>
        </div>
      </div>
    </template>

    <footer class="status">
      <span class="au">AU : ON</span>
      <span class="theme">Dark Colors &amp; Light Grids</span>
      <span class="cell">1:[Book6]export1!Col("Voltage")[1</span>
    </footer>

    <div class="ime">
      <span class="zh">中</span>
      <svg viewBox="0 0 32 32"><circle cx="8" cy="10" r="4" fill="none" stroke="#0a6cdc" stroke-width="3" /><path d="M20 18h6v6l-4 6h-3l3-7h-2z" fill="#0a6cdc" /></svg>
      <svg viewBox="0 0 32 32"><rect x="11" y="0" width="10" height="18" rx="5" fill="#0a6cdc" /><path d="M5 12q0 10 11 10t11-10M16 22v8" fill="none" stroke="#0a6cdc" stroke-width="3" /></svg>
      <svg viewBox="0 0 32 32"><rect x="2" y="5" width="28" height="22" rx="3" fill="none" stroke="#0a6cdc" stroke-width="3" /><path d="M3 12h26M3 19h26M11 6v20M20 6v20" stroke="#0a6cdc" stroke-width="2" /></svg>
      <svg viewBox="0 0 32 32"><path d="M2 8l8-4q6 4 10 0l10 5-4 8-3-1v14H9V16l-4 1z" fill="#8a6cf0" /><path d="M2 8l8-4q6 4 10 0v5L3 14z" fill="#ff5a8a" /><path d="M24 6l5-6 2 2-4 7z" fill="#e02020" /></svg>
      <svg viewBox="0 0 32 32"><path d="M4 3h11v11H4zM18 3h11v11H18zM4 17h11v11H4zM18 17h11v11H18z" fill="#0a6cdc" /></svg>
      <svg viewBox="0 0 32 32"><circle cx="16" cy="16" r="15" fill="#fbf3ee" stroke="#eedcdc" /><path d="M2 14q4-9 18-7l4 6-10 7-10 3z" fill="#e87030" /><path d="M6 10q6-5 12 2l-6 5z" fill="#2a2a2a" /><path d="M27 4l2 4 3 2-3 2-2 4-1-5z" fill="#ffe14a" /></svg>
      <svg class="sogou" viewBox="0 0 62 62"><path d="M0 8q20-2 48-8 3 10 4 22 8 2 9 16-1 14-24 20-16 5-29 4Q2 40 0 8z" fill="#f4511e" /><path d="M48 13Q22 9 15 20q-3 9 14 12 14 3 10 10-6 7-25 4" fill="none" stroke="#fff" stroke-width="8" /></svg>
    </div>
    <div class="mark">CSDN @电子科技小筑</div>
  </div>
</template>

<style>
body { background: #f0f0f0; }
</style>

<style scoped>
.app { position: relative; display: flex; flex-direction: column; min-height: 100vh; overflow: hidden; background: #f0f0f0; color: #000; font: 24px/32px "Noto Sans", "Noto Sans CJK SC", sans-serif; }
.app * { box-sizing: border-box; }
button { display: flex; align-items: center; justify-content: center; flex: none; padding: 0; border: 0; background: none; font: inherit; color: inherit; }
h1, h2 { margin: 0; font-size: 25px; font-weight: 400; white-space: nowrap; }
svg { display: block; flex: none; }
i { flex: none; }

.titlebar { display: flex; align-items: center; height: 46px; background: linear-gradient(90deg, #f3f1f9, #faeef6 55%, #f5f1f8 64%); }
.titlebar h1 { flex: 1; padding-left: 6px; font-size: 23px; }
.logo { width: 34px; height: 38px; }
.sys { width: 92px; height: 46px; }
.sys:last-child { margin-right: 3px; }
.sys svg { width: 20px; height: 20px; fill: none; stroke: #000; stroke-width: 2; overflow: visible; }

.menu { display: flex; height: 36px; padding-left: 1px; background: #fff; margin-bottom: 4px; font-size: 25px; }
.menu button { padding: 0 13px; }

.bar { display: flex; height: 61px; border-bottom: 2px solid #a0a0a0; flex: none; }
.bar.t1 { height: 64px; border-top: 2px solid #a0a0a0; border-bottom: 0; }
.bar.t1 .group { border-bottom: 2px solid #a0a0a0; border-top: 2px solid #fff; }
.group { display: flex; align-items: center; padding-right: 13px; border-right: 2px solid #a0a0a0; border-top: 2px solid #fff; }
.grip { width: 21px; height: 54px; background: linear-gradient(90deg, transparent 7px, #fff 7px 9px, #a0a0a0 9px 11px, transparent 11px 15px, #fff 15px 17px, #a0a0a0 17px 19px, transparent 19px); }
.sep { width: 16px; height: 46px; background: linear-gradient(90deg, transparent 9px, #a0a0a0 9px 11px, #fff 11px 12px, transparent 12px); }
.tb { width: 46px; height: 46px; }
.ico { width: 32px; height: 32px; overflow: visible; shape-rendering: crispEdges; }
.ico.off { filter: drop-shadow(2px 2px 0 #fff); }
.tb.pressed, .tools .pressed { background: #f8f8f8; border: 2px solid; border-color: #a0a0a0 #fff #fff #a0a0a0; }
.drop { width: 28px; height: 46px; }
.drop svg { width: 14px; height: 8px; }
.drop:disabled svg { fill: #a0a0a0; }
.combo { display: flex; align-items: center; margin-right: 2px; padding: 0 8px 0 2px; background: #fff; border: 2px solid #8a8a8a; border-radius: 3px; flex: none; }
.grip + .combo { margin-left: 4px; }
.combo + .tb { margin-left: 2px; }
.combo.off { border-color: #c8c8c8; color: #707070; }
.combo select { flex: 1; min-width: 0; height: 32px; padding: 0 0 0 4px; border: 0; background: none; appearance: none; font: inherit; font-size: 22px; color: inherit; opacity: 1; overflow: hidden; text-overflow: clip; }
.combo svg + select { padding-left: 12px; }
.chev { width: 18px; height: 12px; margin-left: 4px; fill: none; stroke: #666; stroke-width: 2; }
.tt + select + .chev { margin-left: 16px; }
.tt { width: 32px; height: 32px; margin-left: 8px; font-family: "Liberation Serif", serif; font-weight: 700; }
.samp { width: 64px; height: 34px; margin-left: 4px; fill: none; stroke: #000; stroke-width: 3; }
.combo .samp + select { padding-left: 8px; }
.samp + select + .chev { margin-left: 10px; }

.work { display: flex; flex: 1; min-height: 0; }
.toolcol { width: 62px; border-right: 3px solid #a0a0a0; flex: none; }
.tools { display: flex; flex-direction: column; align-items: center; padding: 11px 4px 10px 0; border-bottom: 2px solid #a0a0a0; }
.hgrip { height: 14px; background: linear-gradient(#fff 2px, #a0a0a0 2px 4px, transparent 4px 8px, #fff 8px 10px, #a0a0a0 10px 12px, transparent 12px); }
.tools .hgrip { width: 54px; }
.tools button { position: relative; width: 46px; height: 46px; }
.corner { position: absolute; right: 2px; bottom: 2px; width: 8px; height: 8px; background: #0000c8; clip-path: polygon(100% 0, 100% 100%, 0 100%); }

.explorer { display: flex; flex-direction: column; width: 592px; padding: 0 18px 0 8px; border-right: 5px solid #8a8a8a; flex: none; }
.caption { display: flex; align-items: center; gap: 4px; height: 33px; padding: 0 4px 0 4px; }
.caption .hgrip { flex: 1; }
.caption button { width: 24px; height: 24px; border: 2px solid; border-color: #fff #808080 #808080 #fff; }
.caption svg { width: 12px; height: 12px; }
.tree { height: 560px; padding-left: 8px; background: #fff; }
.node { display: flex; align-items: center; gap: 8px; height: 40px; white-space: nowrap; }
.node svg { width: 32px; height: 28px; }
.child { position: relative; margin-left: 35px; gap: 5px; }
.child::before { content: ""; position: absolute; left: -22px; top: 0; width: 22px; height: 20px; border: dotted #808080; border-width: 0 0 2px 2px; }
.picked { padding: 4px 5px; background: #f0f0f0; }
.list { flex: 1; margin-top: 6px; border-top: 3px solid #707070; background: #fff; }
table { border-collapse: collapse; table-layout: fixed; width: 392px; }
th { position: relative; height: 48px; padding: 0; border-right: 2px solid #e2e2e2; font-size: 25px; font-weight: 400; text-align: left; }
th:nth-child(1) { width: 210px; padding-left: 68px; }
th:nth-child(2) { width: 84px; padding-left: 68px; }
th:nth-child(3) { width: 98px; padding-left: 68px; }
.up { position: absolute; left: 22px; top: 20px; width: 14px; height: 8px; background: #808080; clip-path: polygon(50% 0, 100% 100%, 0 100%); }
td { height: 42px; padding: 0 0 0 12px; white-space: nowrap; }
td:first-child { padding-left: 8px; }
.file { display: flex; align-items: center; gap: 4px; font-size: 25px; }
.file svg { width: 32px; height: 32px; shape-rendering: crispEdges; }
.file .active { outline: 2px solid #f0f; outline-offset: -1px; }

.mdi { display: flex; flex: 1; min-width: 0; flex-direction: column; background: #ababab; border-top: 3px solid #696969; }
.graphs { display: flex; flex: 1; padding-right: 6px; }
.win { display: flex; flex: 1; min-width: 0; flex-direction: column; padding: 0 16px 12px; border: 2px solid #444; border-radius: 12px 12px 0 0; background: linear-gradient(#bfcddb, #d7e4f2 60px); box-shadow: inset 0 0 0 2px #eef3f9; }
.win.focus { background: linear-gradient(#99b4d1, #b9d1ea 60px); border-color: #000; box-shadow: inset -2px -2px 0 #28cfe4, inset 2px 2px 0 #eef3f9; }
.wintitle { display: flex; align-items: center; gap: 4px; height: 61px; padding: 12px 2px 0; }
.wintitle h2, .book h2 { flex: 1; padding-left: 4px; }
.win:not(.focus) h2, .book h2 { color: #98999c; }
.wintitle button, .book button { width: 64px; height: 36px; border: 2px solid #8494b4; border-radius: 4px; background: linear-gradient(#c3d1e2, #bccbdc 50%, #c9d7e7); box-shadow: inset 0 0 0 2px #dfe9f4; }
.wintitle button svg, .book button svg { width: 24px; height: 20px; fill: #f4f4f4; stroke: #55586a; stroke-width: 2; }
.focus .wintitle button { border-color: #5f7899; background: linear-gradient(#c4d8ee 45%, #94b0cf 50%, #b5cde6); box-shadow: inset 0 0 0 2px #d4e3f3; }
.focus .wintitle .close { border-color: #551020; background: linear-gradient(#e5a196 45%, #b8432b 50%, #cf6a50); box-shadow: inset 0 0 0 2px #e8aaa0; }
.client { flex: 1; background: #c0c0c0; border: 2px solid; border-color: #696969 #fff #fff #696969; }
.layers { position: absolute; display: flex; padding: 2px 4px; gap: 4px; font: 700 24px/36px "DejaVu Sans", sans-serif; text-align: center; }
.layers span { width: 38px; height: 38px; background: #c0c0c0; }
.flush { padding: 2px 0; }
.flush .cur { width: 40px; line-height: 40px; }
.oth { color: #fff; border: 2px solid; border-color: #fff #808080 #808080 #fff; }
.oth.dark { color: #000; }
.page { width: 100%; height: auto; background: #fff; font-family: "Liberation Serif", serif; }
.num { font-size: 44px; }
.axt { font-size: 46px; }
.leg { font-size: 28px; }

.books { display: flex; height: 104px; padding-bottom: 2px; border-top: 2px solid #555; border-bottom: 2px solid #e8e8e8; }
.book { display: flex; align-items: flex-start; gap: 4px; flex: 0 0 628px; padding: 8px 8px 0; border: 2px solid #4a4a4a; border-top-width: 1px; border-radius: 12px 12px 0 0; background: linear-gradient(#bfcddb, #d7e4f2); box-shadow: inset 0 0 0 2px #e8eff7; }
.book h2 { padding-top: 28px; }

.status { display: flex; align-items: center; height: 38px; padding-bottom: 1px; border-top: 2px solid #d7d7d7; margin-top: 3px; white-space: nowrap; flex: none; }
.au { margin-left: auto; padding: 0 10px; border-right: 2px solid #d0d0d0; }
.theme { width: 344px; padding: 0 8px; border-right: 2px solid #d0d0d0; }
.cell { width: 793px; padding-left: 10px; }

.ime { position: absolute; right: 0; bottom: 5px; display: flex; align-items: center; justify-content: space-between; width: 390px; height: 50px; padding: 0 12px 0 60px; background: #fff; border: 2px solid #b8cce4; }
.ime svg { width: 34px; height: 34px; }
.ime .sogou { position: absolute; left: -16px; top: -10px; width: 62px; height: 62px; }
.zh { color: #0a6cdc; font-weight: 700; font-size: 32px; }
.mark { position: absolute; right: 4px; bottom: 18px; color: #c4c4c4; opacity: .85; text-shadow: 1px 1px 1px #999, -1px -1px 1px #fff; font: 300 56px/70px "Noto Sans", "Noto Sans CJK SC", sans-serif; white-space: nowrap; pointer-events: none; }
</style>
